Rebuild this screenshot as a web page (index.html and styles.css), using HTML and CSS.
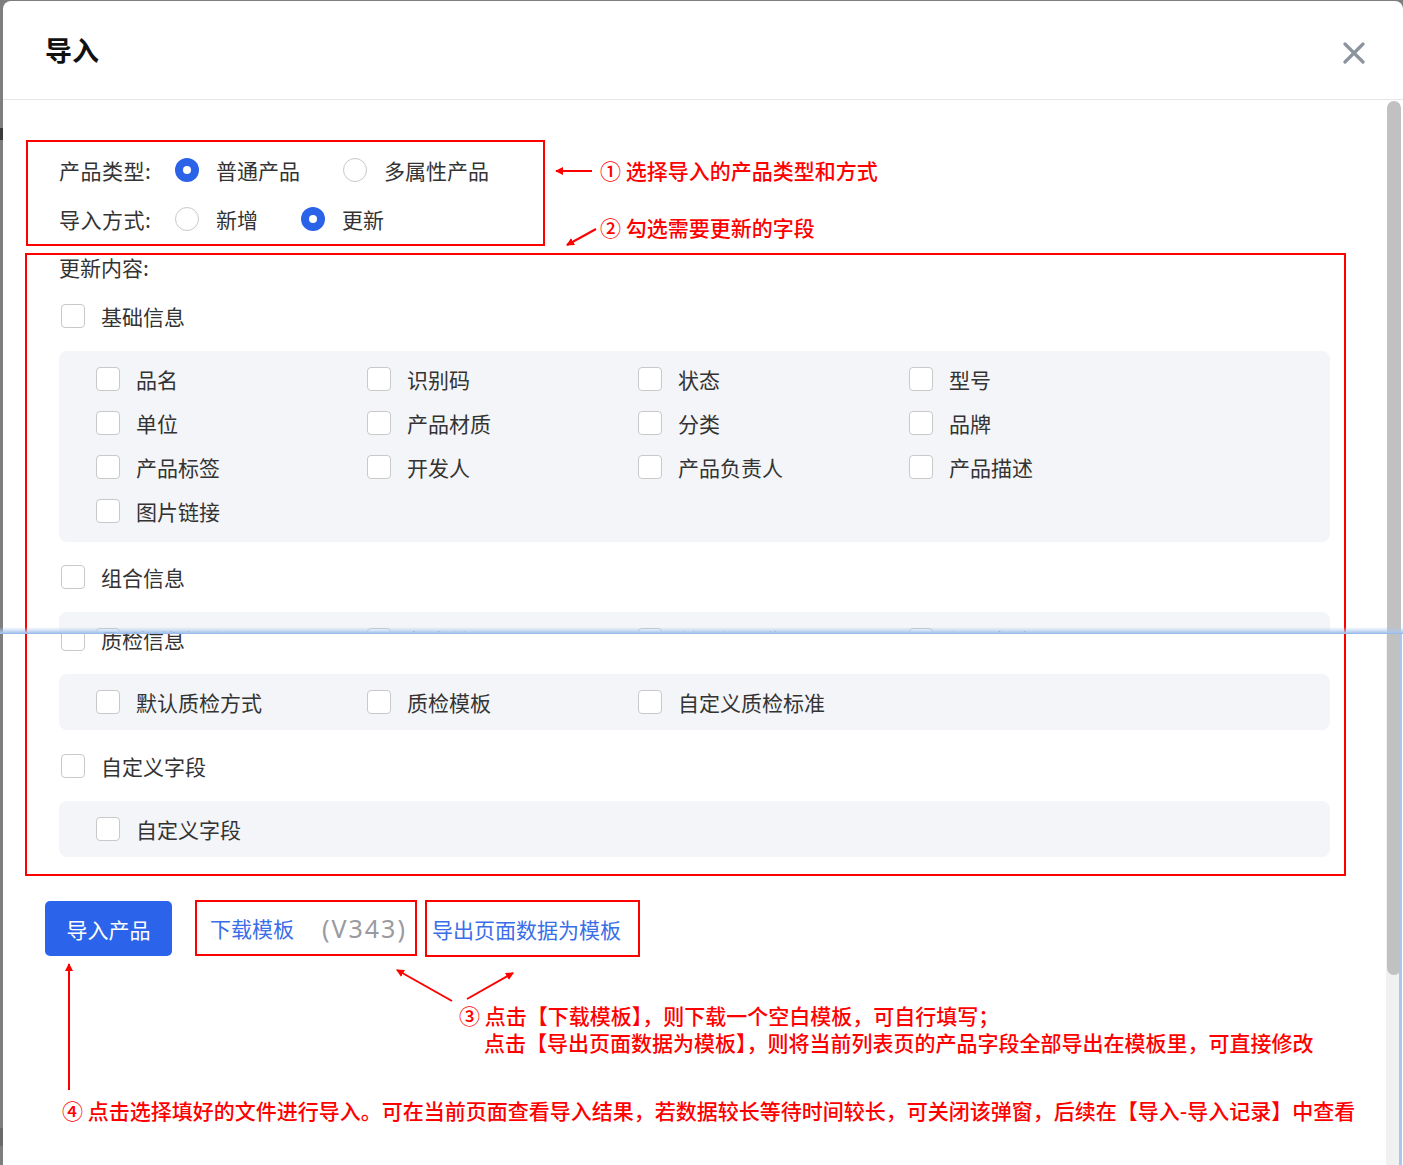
FILE: index.html
```html
<!DOCTYPE html>
<html lang="zh-CN">
<head>
<meta charset="utf-8">
<title>导入</title>
<link rel="stylesheet" href="styles.css">
</head>
<body>
<div class="page">
  <div class="dialog">
    <div class="dialog-header">
      <div class="dialog-title">导入</div>
      <svg class="close-icon" width="22" height="22" viewBox="0 0 22 22"><path d="M2 2 L20 20 M20 2 L2 20" stroke="#8c949e" stroke-width="3.2" stroke-linecap="round"/></svg>
    </div>
    <div class="dialog-body">
      <div class="type-box">
        <div class="form-row">
          <div class="form-label">产品类型:</div>
          <div class="option"><span class="radio checked"></span><span>普通产品</span></div>
          <div class="option"><span class="radio"></span><span>多属性产品</span></div>
        </div>
        <div class="form-row">
          <div class="form-label">导入方式:</div>
          <div class="option"><span class="radio"></span><span>新增</span></div>
          <div class="option"><span class="radio checked"></span><span>更新</span></div>
        </div>
      </div>

      <div class="fields-box">
        <div class="clip-a">
          <div class="section-title">更新内容:</div>
          <div class="group-row group-first"><span class="checkbox"></span><span>基础信息</span></div>
          <div class="panel panel-tall">
            <div class="item"><span class="checkbox"></span><span>品名</span></div>
            <div class="item"><span class="checkbox"></span><span>识别码</span></div>
            <div class="item"><span class="checkbox"></span><span>状态</span></div>
            <div class="item"><span class="checkbox"></span><span>型号</span></div>
            <div class="item"><span class="checkbox"></span><span>单位</span></div>
            <div class="item"><span class="checkbox"></span><span>产品材质</span></div>
            <div class="item"><span class="checkbox"></span><span>分类</span></div>
            <div class="item"><span class="checkbox"></span><span>品牌</span></div>
            <div class="item"><span class="checkbox"></span><span>产品标签</span></div>
            <div class="item"><span class="checkbox"></span><span>开发人</span></div>
            <div class="item"><span class="checkbox"></span><span>产品负责人</span></div>
            <div class="item"><span class="checkbox"></span><span>产品描述</span></div>
            <div class="item"><span class="checkbox"></span><span>图片链接</span></div>
          </div>
          <div class="group-row"><span class="checkbox"></span><span>组合信息</span></div>
          <div class="panel">
            <div class="item"><span class="checkbox"></span><span>包装类型</span></div>
            <div class="item"><span class="checkbox"></span><span>包含关目</span></div>
            <div class="item"><span class="checkbox"></span><span>关联加工费</span></div>
            <div class="item"><span class="checkbox"></span><span>加工备注</span></div>
          </div>
        </div>
        <div class="clip-b">
          <div class="group-row shift-up"><span class="checkbox"></span><span>质检信息</span></div>
          <div class="panel">
            <div class="item"><span class="checkbox"></span><span>默认质检方式</span></div>
            <div class="item"><span class="checkbox"></span><span>质检模板</span></div>
            <div class="item"><span class="checkbox"></span><span>自定义质检标准</span></div>
          </div>
          <div class="group-row group-last"><span class="checkbox"></span><span>自定义字段</span></div>
          <div class="panel">
            <div class="item"><span class="checkbox"></span><span>自定义字段</span></div>
          </div>
        </div>
      </div>

      <div class="actions">
        <div class="btn-primary">导入产品</div>
        <div class="link-box link-box-download"><span class="link">下载模板</span><span class="version">(V343)</span></div>
        <div class="link-box link-box-export"><span class="link">导出页面数据为模板</span></div>
      </div>
    </div>
  </div>

  <!-- overlays -->
  <div class="scroll-track"></div>
  <div class="scroll-thumb"></div>
  <div class="seam"></div>
  <div class="seam-edge"></div>
  <div class="left-mark left-mark-top"></div>
  <div class="left-mark left-mark-bottom"></div>

  <svg class="arrows" width="1403" height="1165" viewBox="0 0 1403 1165">
    <defs>
      <marker id="ah" markerWidth="8" markerHeight="8" refX="7" refY="4" orient="auto" markerUnits="userSpaceOnUse">
        <path d="M0 0 L8 4 L0 8 Z" fill="#f00"/>
      </marker>
    </defs>
    <g stroke="#f00" stroke-width="2" fill="none">
      <line x1="592" y1="171" x2="556" y2="171" marker-end="url(#ah)"/>
      <line x1="596" y1="229" x2="567" y2="245" marker-end="url(#ah)"/>
      <line x1="452" y1="1001" x2="397" y2="970" marker-end="url(#ah)"/>
      <line x1="467" y1="999" x2="513" y2="973" marker-end="url(#ah)"/>
      <line x1="69" y1="1090" x2="69" y2="964" marker-end="url(#ah)"/>
    </g>
  </svg>

  <div class="note note-1">① 选择导入的产品类型和方式</div>
  <div class="note note-2">② 勾选需要更新的字段</div>
  <div class="note note-3a">③ 点击【下载模板】，则下载一个空白模板，可自行填写；</div>
  <div class="note note-3b">点击【导出页面数据为模板】，则将当前列表页的产品字段全部导出在模板里，可直接修改</div>
  <div class="note note-4">④ 点击选择填好的文件进行导入。可在当前页面查看导入结果，若数据较长等待时间较长，可关闭该弹窗，后续在【导入-导入记录】中查看</div>
</div>
</body>
</html>
```

FILE: styles.css
```css
* { box-sizing: border-box; }
html, body { margin: 0; padding: 0; }
body {
  width: 1403px;
  height: 1165px;
  overflow: hidden;
  background: #7e7e7e;
  font-family: "Noto Sans CJK SC", "Noto Sans", sans-serif;
  color: #333;
}
.page {
  position: relative;
  width: 1403px;
  height: 1165px;
  padding: 1px 0 0 3px;
}
.dialog {
  width: 1400px;
  height: 1164px;
  background: #fff;
  border-radius: 8px 8px 0 0;
}
.dialog-header {
  height: 99px;
  border-bottom: 1px solid #e6e6e6;
  display: flex;
  align-items: center;
  justify-content: space-between;
  padding: 0 38px 0 42px;
}
.dialog-title {
  font-size: 27px;
  font-weight: 700;
  color: #111;
  line-height: 36px;
}
.close-icon { margin-top: 6px; }

.dialog-body { padding-top: 40px; }

.type-box {
  margin-left: 23px;
  width: 519px;
  border: 2px solid #f00;
  padding: 12px 0 9px 31px;
}
.form-row {
  height: 32px;
  display: flex;
  align-items: center;
  font-size: 21px;
  line-height: 30px;
}
.form-row + .form-row { margin-top: 17px; }
.form-label { width: 116px; letter-spacing: 0.5px; }
.option {
  display: flex;
  align-items: center;
  gap: 17px;
  margin-right: 43px;
}
.radio {
  width: 24px;
  height: 24px;
  border-radius: 50%;
  border: 1px solid #c9c9c9;
  background: #fff;
  position: relative;
  flex: none;
}
.radio.checked {
  border: none;
  background: #2a63e8;
}
.radio.checked::after {
  content: "";
  position: absolute;
  left: 8px;
  top: 8px;
  width: 8px;
  height: 8px;
  border-radius: 50%;
  background: #fff;
}

.fields-box {
  margin: 7px 0 0 22px;
  width: 1321px;
  border: 2px solid #f00;
  padding: 0 14px 0 32px;
  font-size: 21px;
}
.clip-a {
  height: 377px;
  overflow: hidden;
}
.clip-b {
  overflow: hidden;
  padding-bottom: 17px;
}
.section-title { line-height: 24px; }
.group-row {
  margin-top: 23px;
  margin-left: 2px;
  height: 24px;
  display: flex;
  align-items: center;
  gap: 16px;
  line-height: 24px;
}
.group-row.group-first { margin-top: 25px; }
.group-row.shift-up { margin-top: -5px; }
.group-row.group-last { margin-top: 24px; }
.checkbox {
  width: 24px;
  height: 24px;
  border: 1px solid #c9c9c9;
  border-radius: 4px;
  background: #fff;
  flex: none;
}
.panel {
  margin-top: 23px;
  background: #f4f5f8;
  border-radius: 8px;
  padding: 16px 0 16px 37px;
  display: grid;
  grid-template-columns: repeat(4, 271px);
  row-gap: 20px;
}
.panel.panel-tall { padding-bottom: 19px; }
.item {
  display: flex;
  align-items: center;
  gap: 16px;
  height: 24px;
  line-height: 24px;
}

.actions {
  margin: 24px 0 0 42px;
  display: flex;
  align-items: flex-start;
}
.btn-primary {
  margin-top: 1px;
  width: 127px;
  height: 55px;
  border-radius: 5px;
  background: #2b64ea;
  color: #fff;
  font-size: 21px;
  display: flex;
  align-items: center;
  justify-content: center;
}
.link-box {
  border: 2px solid #f00;
  display: flex;
  align-items: center;
}
.link-box-download {
  margin-left: 23px;
  width: 222px;
  height: 56px;
  padding-left: 13px;
}
.link-box-export {
  margin-left: 8px;
  width: 215px;
  height: 57px;
  padding-left: 5px;
}
.link {
  color: #3a6ee8;
  font-size: 21px;
}
.version {
  margin-left: 28px;
  color: #9a9aa0;
  font-family: "Noto Sans", sans-serif;
  font-size: 25px;
  letter-spacing: 2px;
}

/* overlays */
.scroll-track {
  position: absolute;
  left: 1386px;
  top: 632px;
  width: 13px;
  height: 533px;
  background: #f1f1f1;
}
.scroll-thumb {
  position: absolute;
  left: 1387px;
  top: 101px;
  width: 14px;
  height: 874px;
  border-radius: 7px;
  background: #c1c1c1;
}
.seam {
  position: absolute;
  left: 0;
  top: 627px;
  width: 1403px;
  height: 7px;
  background: linear-gradient(to bottom, rgba(170, 200, 238, 0) 0%, rgba(170, 200, 238, 0.55) 50%, #a6c4ec 85%, #8fb3e6 100%);
}
.seam-edge {
  position: absolute;
  left: 1399px;
  top: 634px;
  width: 3px;
  height: 531px;
  background: #a9c6ee;
}
.left-mark {
  position: absolute;
  left: 0;
  width: 3px;
}
.left-mark-top {
  top: 128px;
  height: 12px;
  background: #3a3a3a;
}
.left-mark-bottom {
  top: 1128px;
  height: 18px;
  background: #6a6a6a;
}
.arrows {
  position: absolute;
  left: 0;
  top: 0;
  pointer-events: none;
}
.note {
  position: absolute;
  color: #f00;
  font-size: 21px;
  font-weight: 500;
  line-height: 28px;
  white-space: nowrap;
}
.note-1 { left: 600px; top: 156px; }
.note-2 { left: 600px; top: 213px; }
.note-3a { left: 459px; top: 1001px; }
.note-3b { left: 484px; top: 1028px; }
.note-4 { left: 62px; top: 1096px; }
```
